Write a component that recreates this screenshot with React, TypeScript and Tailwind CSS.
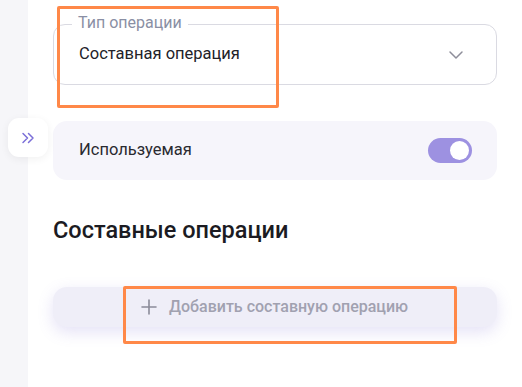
import React from "react";

export default function App() {
  return (
    <div
      className="relative flex w-[522px] h-[387px] overflow-hidden bg-white"
      style={{ fontFamily: "Roboto, 'Noto Sans', sans-serif" }}
    >
      <div className="w-[28px] shrink-0 bg-[#f6f6f9]" />
      <div className="flex-1 flex flex-col px-[25px] pt-[24px]">
        {/* Select */}
        <div className="relative h-[61px] rounded-[12px] border-[1.5px] border-[#dadae2] flex items-center pl-[25px] pr-[32px]">
          <span className="absolute -top-[12px] left-[18px] bg-white px-[6px] text-[16px] leading-[20px] text-[#8a8fa4]">
            Тип операции
          </span>
          <span className="flex-1 text-[16.5px] text-[#222229]">Составная операция</span>
          <svg width="16" height="10" viewBox="0 0 16 10" fill="none">
            <path d="M2 2l6 6 6-6" stroke="#8e8e9a" strokeWidth="1.5" strokeLinecap="round" strokeLinejoin="round" />
          </svg>
        </div>

        {/* Toggle card */}
        <div className="mt-[36px] h-[59px] rounded-[14px] bg-[#f6f5fb] flex items-center pl-[26px] pr-[25px]">
          <span className="flex-1 text-[16.5px] text-[#2a2a30]">Используемая</span>
          <div className="w-[44px] h-[25px] rounded-full bg-[#9d91e1] flex items-center justify-end pr-[3px]">
            <div className="w-[19px] h-[19px] rounded-full bg-white" />
          </div>
        </div>

        {/* Heading */}
        <h2 className="mt-[35px] text-[23.5px] leading-[30px] font-medium text-[#1b1b22]">Составные операции</h2>

        {/* Add button */}
        <div className="mt-[42px] h-[40px] rounded-[14px] bg-[#efeef8] shadow-[0_5px_16px_rgba(120,105,210,0.2)] flex items-center pl-[88px]">
          <svg width="16" height="16" viewBox="0 0 16 16" fill="none">
            <path d="M8 1v14M1 8h14" stroke="#8b8b99" strokeWidth="1.6" strokeLinecap="round" />
          </svg>
          <span className="ml-[12px] text-[16px] font-medium text-[#a1a1b0]">Добавить составную операцию</span>
        </div>
      </div>

      {/* Collapse button */}
      <div className="absolute left-[8px] top-[118px] w-[40px] h-[39px] rounded-[11px] bg-white shadow-[0_2px_8px_rgba(0,0,0,0.06)] flex items-center justify-center">
        <svg width="14" height="12" viewBox="0 0 14 12" fill="none">
          <path d="M2 1.5l4.5 4.5L2 10.5M7.5 1.5L12 6l-4.5 4.5" stroke="#7b6fd8" strokeWidth="1.5" strokeLinecap="round" strokeLinejoin="round" />
        </svg>
      </div>

      {/* Annotation boxes */}
      <div className="absolute left-[57px] top-[6px] w-[222px] h-[102px] border-[3px] border-[#ff8848] rounded-[2px]" />
      <div className="absolute left-[123px] top-[286px] w-[334px] h-[58px] border-[3px] border-[#ff8848] rounded-[2px]" />
    </div>
  );
}
